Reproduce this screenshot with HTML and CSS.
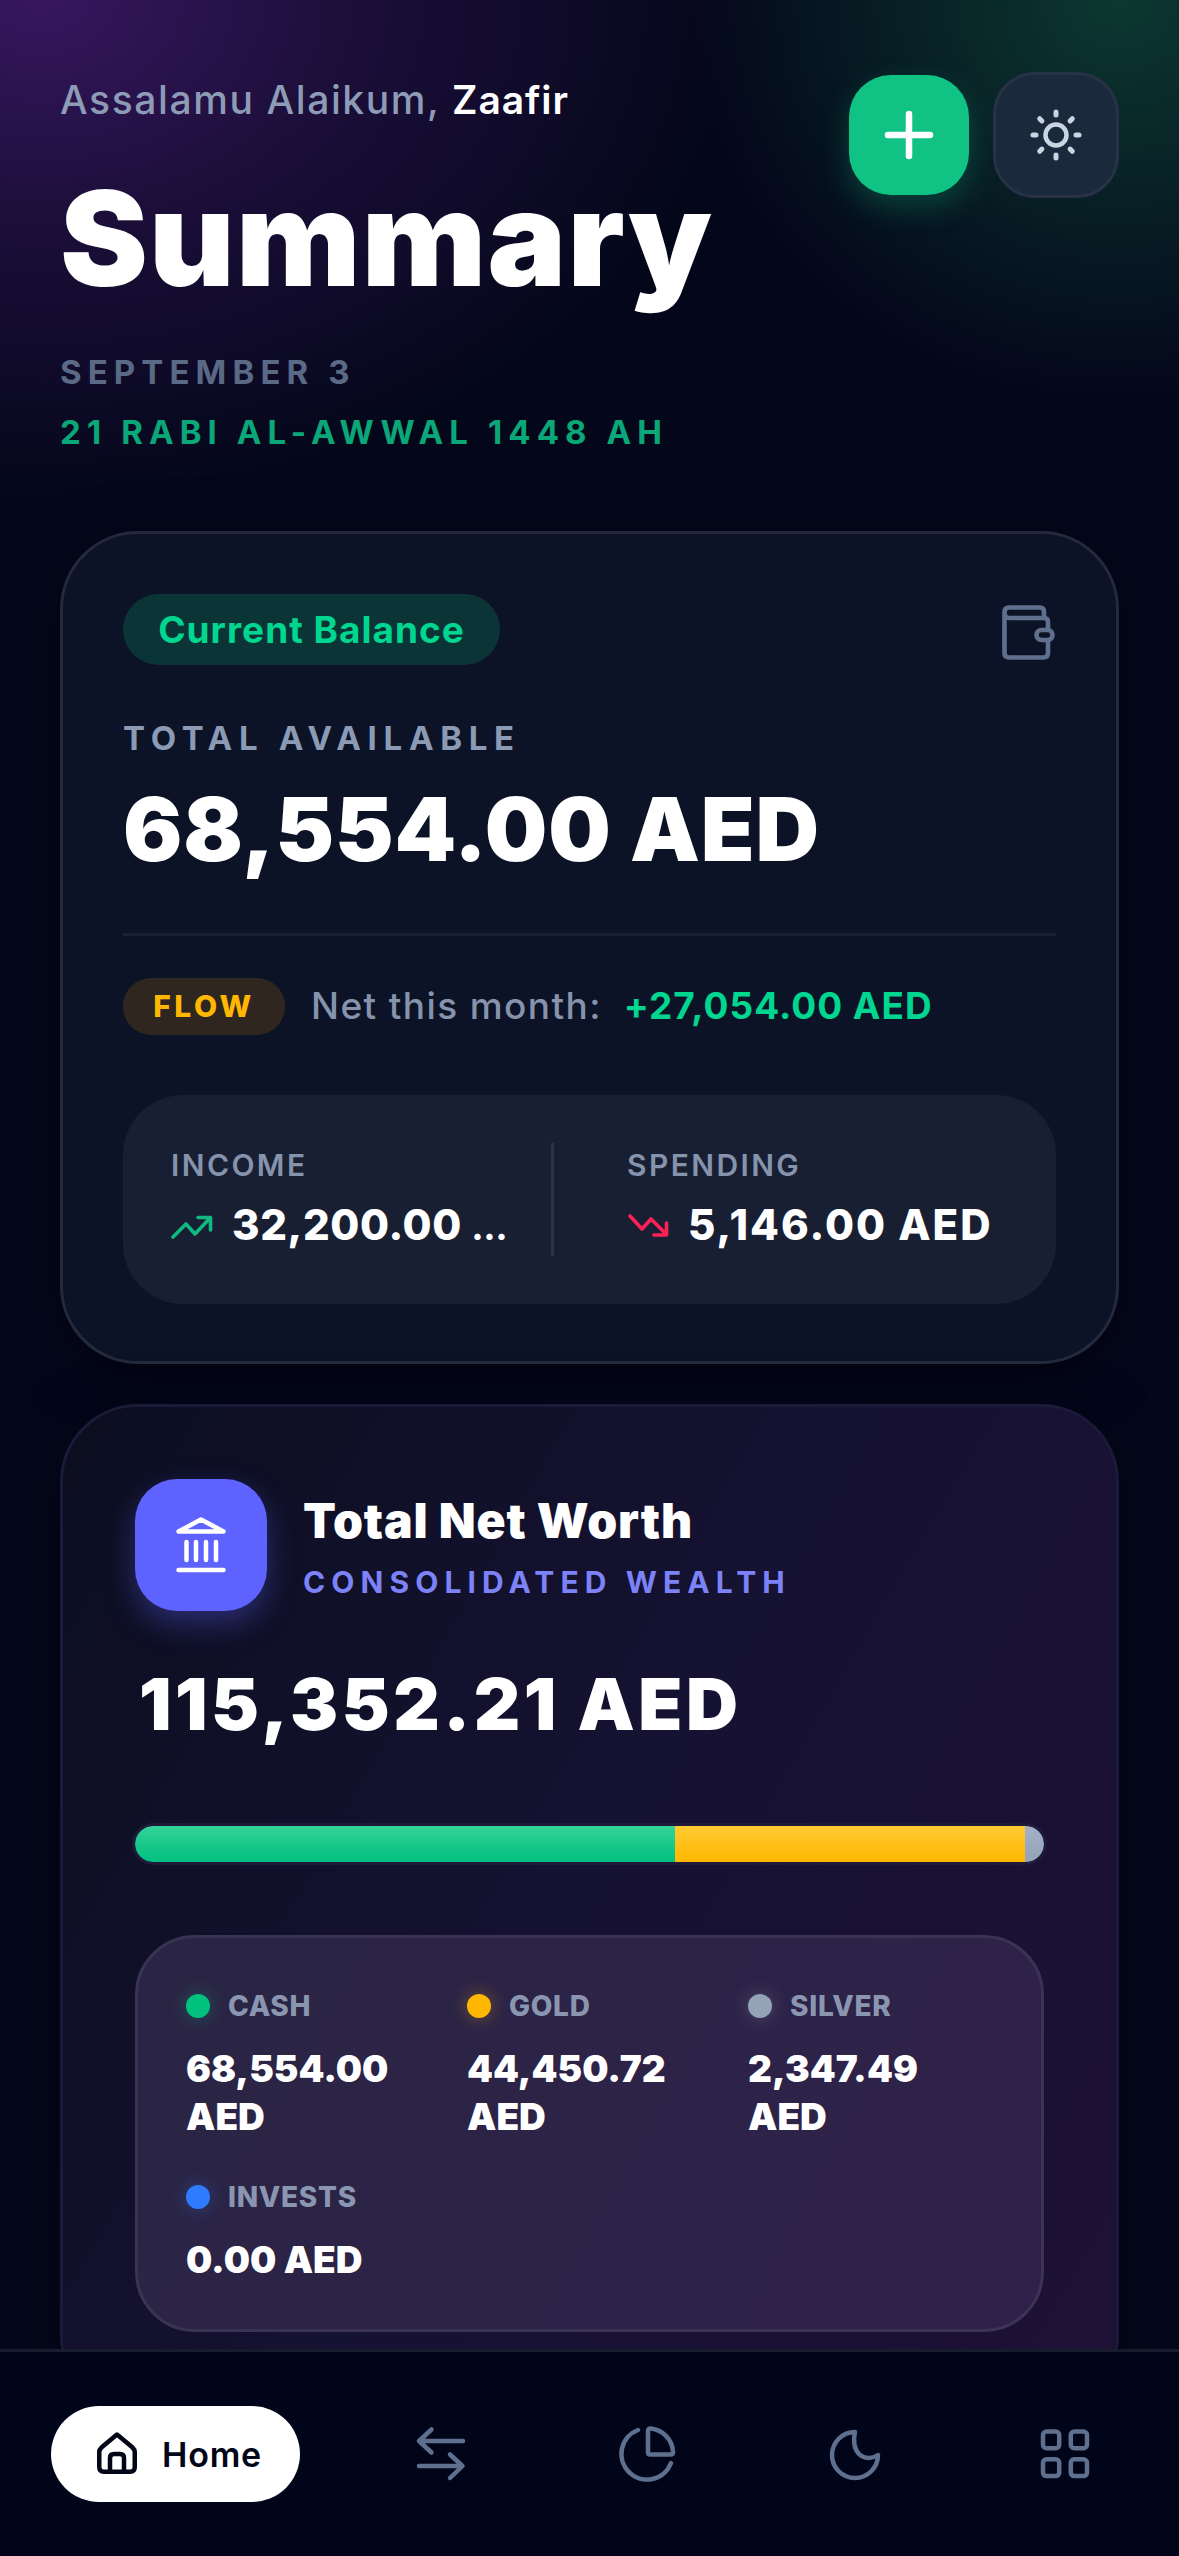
FILE: index.html
```html
<!DOCTYPE html>
<html>
  <head>
    <meta charset="utf-8">
    <title>Summary</title>
    <link rel="stylesheet" href="styles.css">
  </head>
  <body>
    <div class="page">
      <header class="top">
        <div class="top-text">
          <p class="greeting">Assalamu Alaikum, <span class="name">Zaafir</span></p>
          <h1 class="title">Summary</h1>
          <p class="date">SEPTEMBER 3</p>
          <p class="date hijri">21 RABI AL-AWWAL 1448 AH</p>
        </div>
        <div class="top-buttons">
          <button class="round-btn add">
            <svg width="60" height="60" viewBox="0 0 60 60" fill="none" stroke="#fff" stroke-width="6.5" stroke-linecap="round"><path d="M30 9V51M9 30H51"/></svg>
          </button>
          <button class="round-btn theme">
            <svg width="60" height="60" viewBox="0 0 60 60" fill="none" stroke="#cbd5e1" stroke-linecap="round"><circle cx="30" cy="30" r="10.5" stroke-width="4.5"/><path stroke-width="5" d="M30 7V10M30 50V53M7 30H10M50 30H53M13.7 13.7L15.9 15.9M44.1 44.1L46.3 46.3M13.7 46.3L15.9 44.1M44.1 15.9L46.3 13.7"/></svg>
          </button>
        </div>
      </header>

      <section class="card balance">
        <div class="card-head">
          <span class="pill">Current Balance</span>
          <svg class="wallet" width="60" height="60" viewBox="0 0 60 60" fill="none" stroke="#5f708e" stroke-width="4.6" stroke-linejoin="round"><path d="M9.5 12Q9.5 7.5 14 7.5H45Q49 7.5 49 12V18M9.5 12Q9.5 18 14 18H49Q53 18 53 22V53Q53 57.5 48.5 57.5H14Q9.5 57.5 9.5 53Z"/><rect x="41.5" y="30" width="16" height="10" rx="5" fill="#0d1326"/></svg>
        </div>
        <p class="small-label">TOTAL AVAILABLE</p>
        <p class="big-amount">68,554.00 AED</p>
        <div class="rule"></div>
        <div class="flow-row">
          <span class="flow-tag">FLOW</span>
          <span class="flow-text">Net this month:</span>
          <span class="flow-value">+27,054.00 AED</span>
        </div>
        <div class="stats">
          <div class="stat stat-left">
            <p class="stat-label">INCOME</p>
            <p class="stat-value">
              <svg width="42" height="30" viewBox="0 0 42 30" fill="none" stroke="#10b981" stroke-width="3.6" stroke-linecap="round" stroke-linejoin="round"><path d="M2 25L15 12L24 22L39 6M27 5.500H39.500V18"/></svg>
              <span class="stat-cut">32,200.00 <small>…</small></span>
            </p>
          </div>
          <div class="stat-line"></div>
          <div class="stat stat-right">
            <p class="stat-label">SPENDING</p>
            <p class="stat-value">
              <svg width="42" height="30" viewBox="0 0 42 30" fill="none" stroke="#ff2056" stroke-width="3.6" stroke-linecap="round" stroke-linejoin="round"><path d="M3 6L15 19L24 9L39 24M39.500 13V25H27"/></svg>
              <span>5,146.00 AED</span>
            </p>
          </div>
        </div>
      </section>

      <section class="card worth">
        <div class="worth-head">
          <div class="bank">
            <svg width="60" height="60" viewBox="0 0 60 60" fill="none" stroke="#fff" stroke-width="4.5" stroke-linecap="round" stroke-linejoin="round"><path d="M30 4.500L52.500 16.500H7.500Z"/><path d="M15.500 27V45M25 27V45M35 27V45M45 27V45M7.500 55H52.500"/></svg>
          </div>
          <div>
            <h2 class="worth-title">Total Net Worth</h2>
            <p class="worth-sub">CONSOLIDATED WEALTH</p>
          </div>
        </div>
        <p class="worth-amount">115,352.21 AED</p>
        <div class="bar">
          <div class="bar-part green" style="width: 59.43%"></div>
          <div class="bar-part yellow" style="width: 38.53%"></div>
          <div class="bar-part grey" style="width: 2.04%"></div>
        </div>
        <div class="assets">
          <div class="asset">
            <p class="asset-label"><i class="dot dot-cash"></i>CASH</p>
            <p class="asset-value">68,554.00 AED</p>
          </div>
          <div class="asset">
            <p class="asset-label"><i class="dot dot-gold"></i>GOLD</p>
            <p class="asset-value">44,450.72 AED</p>
          </div>
          <div class="asset">
            <p class="asset-label"><i class="dot dot-silver"></i>SILVER</p>
            <p class="asset-value">2,347.49 AED</p>
          </div>
          <div class="asset">
            <p class="asset-label"><i class="dot dot-invest"></i>INVESTS</p>
            <p class="asset-value">0.00 AED</p>
          </div>
        </div>
      </section>

      <nav class="nav">
        <button class="nav-home">
          <svg width="48" height="48" viewBox="0 0 48 48" fill="none" stroke="#020617" stroke-width="4.500" stroke-linejoin="round" stroke-linecap="round"><path d="M24 4.500L39 17Q41.750 19.500 41.750 22V37Q41.750 41.750 37 41.750H11Q6.250 41.750 6.250 37V22Q6.250 19.500 9 17Z"/><path d="M17 41V28Q17 24 21 24H27Q31 24 31 28V41"/></svg>
          Home
        </button>
        <button class="nav-btn">
          <svg width="72" height="72" viewBox="0 0 72 72" fill="none" stroke="#5f708e" stroke-width="4.500" stroke-linecap="round" stroke-linejoin="round"><path d="M55 23H11M23.500 11.500L11 23L23.500 34.500"/><path d="M11 48H54M42 36.500L54.500 48L42 60"/></svg>
        </button>
        <button class="nav-btn">
          <svg width="72" height="72" viewBox="0 0 72 72" fill="none" stroke="#5f708e" stroke-width="4.500" stroke-linecap="round" stroke-linejoin="round"><path d="M23 12A25.600 25.600 0 1 0 56 45"/><path d="M33 13Q33 10 36 10.500A25 25 0 0 1 58 33Q58.500 36.500 56 36.500H35Q33 36.500 33 34.500Z"/></svg>
        </button>
        <button class="nav-btn">
          <svg width="72" height="72" viewBox="0 0 72 72" fill="none" stroke="#5f708e" stroke-width="4.500" stroke-linecap="round" stroke-linejoin="round"><path d="M33 14A23 23 0 1 0 56 37C50 41 42 41 37 36C32 31 31 22 33 14Z"/></svg>
        </button>
        <button class="nav-btn">
          <svg width="72" height="72" viewBox="0 0 72 72" fill="none" stroke="#5f708e" stroke-width="4.500"><rect x="14" y="13.500" width="16.200" height="16.800" rx="3.500"/><rect x="41.800" y="13.500" width="16.200" height="16.800" rx="3.500"/><rect x="14" y="41.300" width="16.200" height="16.800" rx="3.500"/><rect x="41.800" y="41.300" width="16.200" height="16.800" rx="3.500"/></svg>
        </button>
      </nav>
    </div>
  </body>
</html>
```

FILE: styles.css
```css
* {
  box-sizing: border-box;
}

html, body {
  margin: 0;
  background: #04071a;
}

body {
  font-family: 'Inter', 'Noto Sans', sans-serif;
  color: #fff;
}

p, h1, h2 {
  margin: 0;
}

button {
  font-family: inherit;
  border: 0;
  padding: 0;
}

.page {
  position: relative;
  width: 1179px;
  height: 2556px;
  overflow: hidden;
  padding: 0 60px;
  background:
    radial-gradient(ellipse 700px 500px at 40px 0, #37175f 0%, rgba(55, 23, 95, 0.45) 45%, rgba(55, 23, 95, 0) 100%),
    radial-gradient(ellipse 430px 400px at 1120px 0, #0c3831 0%, rgba(12, 56, 49, 0.5) 50%, rgba(12, 56, 49, 0) 100%),
    #04071a;
}

/* header */
.top {
  display: flex;
  justify-content: space-between;
  align-items: flex-start;
  height: 531px;
  padding-top: 72px;
}

.top-text {
  padding-top: 4px;
}

.greeting {
  font-size: 39px;
  line-height: 48px;
  font-weight: 500;
  letter-spacing: 1.6px;
  color: #8e9bb6;
}

.name {
  color: #fff;
  font-weight: 600;
  letter-spacing: 0.9px;
}

.title {
  margin-top: 44px;
  font-size: 132px;
  line-height: 140px;
  font-weight: 900;
  letter-spacing: 1.2px;
}

.date {
  margin-top: 44px;
  font-size: 33px;
  line-height: 40px;
  font-weight: 700;
  letter-spacing: 6.1px;
  color: #5a6a86;
}

.hijri {
  margin-top: 20px;
  color: #0aa878;
}

.top-buttons {
  display: flex;
  align-items: center;
  gap: 24px;
}

.round-btn {
  display: flex;
  align-items: center;
  justify-content: center;
  border-radius: 42px;
}

.add {
  width: 120px;
  height: 120px;
  background: #10c284;
  box-shadow: 0 12px 30px rgba(16, 194, 132, 0.25);
}

.theme {
  width: 126px;
  height: 126px;
  background: #1a2a3c;
  border: 3px solid #273246;
}

/* cards */
.card {
  border-radius: 78px;
  border: 3px solid #232a3e;
  box-shadow: 0 12px 60px rgba(0, 0, 0, 0.35);
}

.balance {
  height: 833px;
  padding: 60px;
  background: #0d1326;
}

.card-head {
  display: flex;
  justify-content: space-between;
  align-items: center;
}

.wallet {
  margin-right: 1px;
}

.pill {
  display: inline-block;
  width: 377px;
  height: 71px;
  line-height: 71px;
  border-radius: 36px;
  text-align: center;
  background: #0b3437;
  color: #00d68f;
  font-size: 37px;
  font-weight: 700;
  letter-spacing: 1px;
}

.small-label {
  margin-top: 53px;
  font-size: 33px;
  line-height: 40px;
  font-weight: 700;
  letter-spacing: 6.7px;
  color: #8b9ab5;
}

.big-amount {
  margin-top: 21px;
  font-size: 88px;
  line-height: 100px;
  font-weight: 900;
  letter-spacing: 0.8px;
}

.rule {
  height: 3px;
  margin-top: 54px;
  background: #191f33;
}

.flow-row {
  display: flex;
  align-items: center;
  height: 57px;
  margin-top: 42px;
  font-size: 37px;
}

.flow-tag {
  width: 162px;
  height: 57px;
  line-height: 57px;
  margin-right: 26px;
  border-radius: 28px;
  text-align: center;
  background: #2e261f;
  color: #ffb703;
  font-size: 30px;
  font-weight: 800;
  letter-spacing: 3.5px;
}

.flow-text {
  color: #8593ac;
  font-weight: 500;
  margin-right: 22px;
  padding-bottom: 3px;
  letter-spacing: 1.4px;
}

.flow-value {
  color: #00d68f;
  font-weight: 700;
  padding-bottom: 3px;
  letter-spacing: 1px;
}

.stats {
  display: flex;
  margin-top: 60px;
  padding: 48px 0;
  border-radius: 60px;
  background: #181f32;
}

.stat-left {
  flex: none;
  width: 428px;
  padding-left: 48px;
}

.stat-right {
  flex: 1;
  padding-left: 73px;
}

.stat-line {
  flex: none;
  width: 3px;
  background: #2c3347;
}

.stat-label {
  font-size: 30px;
  line-height: 44px;
  font-weight: 600;
  letter-spacing: 2.4px;
  color: #8593ac;
}

.stat-value {
  display: flex;
  align-items: center;
  gap: 19px;
  margin-top: 10px;
  font-size: 42px;
  line-height: 56px;
  font-weight: 800;
  letter-spacing: 2px;
  white-space: nowrap;
}

.stat-cut {
  letter-spacing: 0.6px;
}

.stat-cut small {
  font-size: 34px;
}

.worth {
  margin-top: 40px;
  height: 1010px;
  padding: 72px;
  border-color: #1b1a38;
  background: linear-gradient(120deg, #0b0e1f 0%, #161233 50%, #1e1136 100%);
}

.worth-head {
  display: flex;
  align-items: center;
  gap: 36px;
}

.bank {
  display: flex;
  align-items: center;
  justify-content: center;
  width: 132px;
  height: 132px;
  border-radius: 42px;
  background: #5e63ff;
  box-shadow: 0 12px 30px rgba(94, 99, 255, 0.35);
}

.worth-title {
  font-size: 48px;
  line-height: 60px;
  font-weight: 900;
  letter-spacing: 0.8px;
}

.worth-sub {
  margin-top: 13px;
  font-size: 30px;
  line-height: 36px;
  font-weight: 700;
  letter-spacing: 6.1px;
  color: #7c83f8;
}

.worth-amount {
  margin: 51px 0 0 4px;
  font-size: 72px;
  line-height: 84px;
  font-weight: 900;
  letter-spacing: 3.5px;
}

.bar {
  display: flex;
  height: 36px;
  margin-top: 80px;
  border-radius: 18px;
  overflow: hidden;
  outline: 3px solid #1f1a3a;
}

.bar-part {
  height: 36px;
}

.green {
  background: linear-gradient(#34d399, #00bf7f);
}

.yellow {
  background: linear-gradient(#ffc933, #ffb700);
}

.grey {
  background: linear-gradient(#a4b0c8, #94a3b8);
}

.assets {
  display: grid;
  grid-template-columns: repeat(3, 244px);
  column-gap: 37px;
  row-gap: 38px;
  height: 397px;
  margin-top: 73px;
  padding: 50px 48px 0;
  border: 3px solid #3a3354;
  border-radius: 60px;
  background: linear-gradient(120deg, #2a2544, #2f214a);
  align-content: start;
}

.asset-label {
  display: flex;
  align-items: center;
  gap: 18px;
  font-size: 28px;
  line-height: 36px;
  font-weight: 800;
  letter-spacing: 0.7px;
  color: #8a96b0;
}

.dot {
  width: 24px;
  height: 24px;
  border-radius: 50%;
}

.dot-cash {
  background: #00c27e;
  box-shadow: 0 0 18px rgba(0, 194, 126, 0.35);
}

.dot-gold {
  background: #ffb700;
  box-shadow: 0 0 18px rgba(255, 183, 0, 0.35);
}

.dot-silver {
  background: #94a3b8;
  box-shadow: 0 0 18px rgba(148, 163, 184, 0.35);
}

.dot-invest {
  background: #2f7bff;
  box-shadow: 0 0 18px rgba(47, 123, 255, 0.35);
}

.asset-value {
  margin-top: 21px;
  font-size: 37px;
  line-height: 48px;
  font-weight: 900;
  letter-spacing: 0;
}

/* bottom bar lies over the scrolled cards */
.nav {
  position: absolute;
  left: 0;
  right: 0;
  bottom: 0;
  height: 207px;
  display: flex;
  align-items: flex-start;
  gap: 81px;
  padding: 54px 51px 0;
  border-top: 3px solid #181d2e;
  background: #01051a;
}

.nav-home {
  display: flex;
  align-items: center;
  gap: 21px;
  flex: none;
  width: 249px;
  height: 96px;
  padding-left: 42px;
  border-radius: 48px;
  background: #fff;
  color: #020617;
  font-size: 34px;
  font-weight: 600;
  letter-spacing: 0.8px;
}

.nav-btn {
  display: flex;
  align-items: center;
  justify-content: center;
  flex: none;
  width: 126px;
  height: 96px;
  background: none;
}
```
